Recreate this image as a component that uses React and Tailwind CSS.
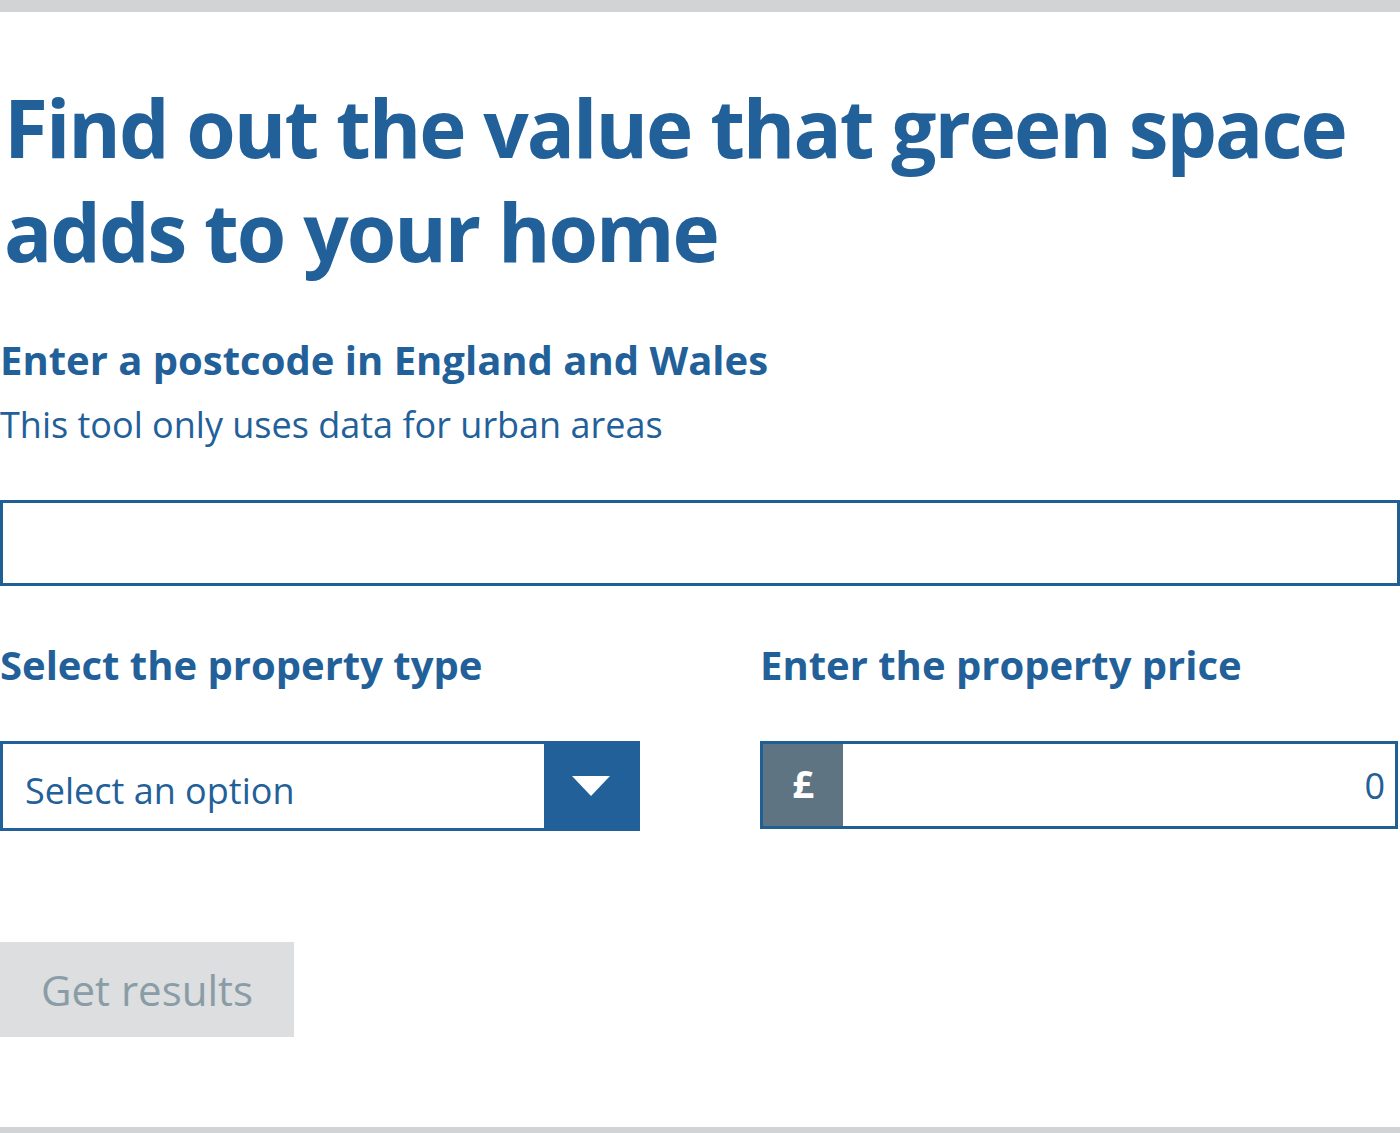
import React, { useState } from 'react';

const font = { fontFamily: '"Open Sans", "Noto Sans", sans-serif' };

export default function App() {
  const [postcode, setPostcode] = useState('');
  const [price, setPrice] = useState('0');

  return (
    <div className="min-h-screen bg-white flex flex-col" style={font}>
      <div className="h-3 bg-[#d1d3d5]" />
      <main className="flex-1 flex flex-col text-[#22609a]">
        <h1 className="mt-[63px] pl-[4px] text-[80px] leading-[104px] font-bold tracking-[-0.025em]">
          Find out the value that green space adds to your home
        </h1>

        <h2 className="mt-[49px] text-[40px] leading-[56px] font-bold">
          Enter a postcode in England and Wales
        </h2>
        <p className="mt-[12px] text-[36px] leading-[50px]">
          This tool only uses data for urban areas
        </p>

        <input
          className="mt-[50px] w-[1400px] h-[86px] border-[3px] border-[#1f5f94] px-4 text-[36px] outline-none"
          value={postcode}
          onChange={(e) => setPostcode(e.target.value)}
        />

        <div className="mt-[51px] grid grid-cols-[640px_640px] gap-x-[120px]">
          <div className="flex flex-col">
            <label className="text-[40px] leading-[56px] font-bold">
              Select the property type
            </label>
            <div className="mt-[48px] flex h-[90px] border-[3px] border-[#22609a]">
              <div className="flex-1 flex items-center pl-[22px] text-[36px] pt-[10px]">
                Select an option
              </div>
              <div className="w-[93px] bg-[#22609a] flex items-center justify-center">
                <svg width="38" height="20" viewBox="0 0 38 20">
                  <polygon points="0,0 38,0 19,20" fill="#fff" />
                </svg>
              </div>
            </div>
          </div>
          <div className="flex flex-col">
            <label className="text-[40px] leading-[56px] font-bold">
              Enter the property price
            </label>
            <div className="mt-[48px] flex h-[88px] w-[638px] border-[3px] border-[#1f5f94]">
              <div className="w-[80px] bg-[#5f7482] flex items-center justify-center text-white text-[38px] font-bold pb-[4px]">
                £
              </div>
              <input
                className="flex-1 min-w-0 text-right pr-[10px] text-[36px] outline-none text-[#22609a] pt-[2px]"
                value={price}
                onChange={(e) => setPrice(e.target.value)}
              />
            </div>
          </div>
        </div>

        <div className="mt-[111px]">
          <button
            disabled
            className="w-[294px] h-[95px] bg-[#dcdee0] text-[#8a9ca6] text-[42px]"
          >
            Get results
          </button>
        </div>
      </main>
      <div className="h-[6px] bg-[#d1d3d5]" />
    </div>
  );
}
